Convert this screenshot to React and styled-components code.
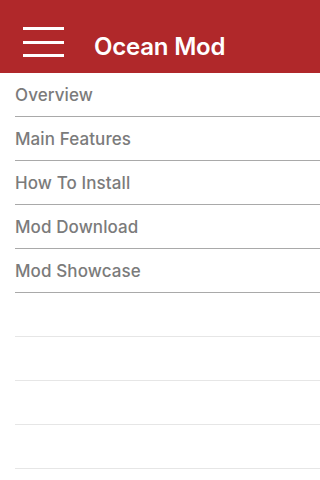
import React from 'react';
import styled, { createGlobalStyle } from 'styled-components';

const GlobalStyle = createGlobalStyle`
  html, body {
    margin: 0;
    padding: 0;
    background: #ffffff;
  }
  body {
    font-family: Inter, "Liberation Sans", Arial, sans-serif;
  }
`;

const Screen = styled.div`
  width: 320px;
  height: 480px;
  overflow: hidden;
  background: #ffffff;
`;

const Header = styled.header`
  height: 73px;
  background: #b0282a;
  display: flex;
  align-items: center;
  padding: 12px 0 0 23px;
  box-sizing: border-box;
  gap: 30px;
`;

const MenuButton = styled.button`
  width: 41px;
  height: 30px;
  margin-bottom: 1px;
  padding: 0;
  border: none;
  background: none;
  display: flex;
  flex-direction: column;
  justify-content: space-between;
  cursor: pointer;
`;

const Bar = styled.span`
  display: block;
  height: 3px;
  width: 100%;
  background: #ffffff;
`;

const Title = styled.h1`
  margin: 8px 0 0;
  color: #ffffff;
  font-size: 24px;
  font-weight: 600;
  letter-spacing: -0.2px;
`;

const List = styled.ul`
  list-style: none;
  margin: 0;
  padding: 0 0 0 15px;
`;

const Row = styled.li`
  height: 44px;
  box-sizing: border-box;
  display: flex;
  align-items: center;
  border-bottom: 1px solid ${(p) => (p.$empty ? '#e6e6e6' : '#a9a9a9')};
  color: #7b7b7b;
  font-size: 17px;
  font-weight: 500;
  letter-spacing: 0.1px;
  cursor: ${(p) => (p.$empty ? 'default' : 'pointer')};
`;

const items = ['Overview', 'Main Features', 'How To Install', 'Mod Download', 'Mod Showcase'];

function App() {
  return (
    <Screen>
      <GlobalStyle />
      <Header>
        <MenuButton aria-label="Menu">
          <Bar />
          <Bar />
          <Bar />
        </MenuButton>
        <Title>Ocean Mod</Title>
      </Header>
      <List>
        {items.map((item) => (
          <Row key={item}>{item}</Row>
        ))}
        {[0, 1, 2, 3].map((i) => (
          <Row key={'empty' + i} $empty />
        ))}
      </List>
    </Screen>
  );
}

export default App;
